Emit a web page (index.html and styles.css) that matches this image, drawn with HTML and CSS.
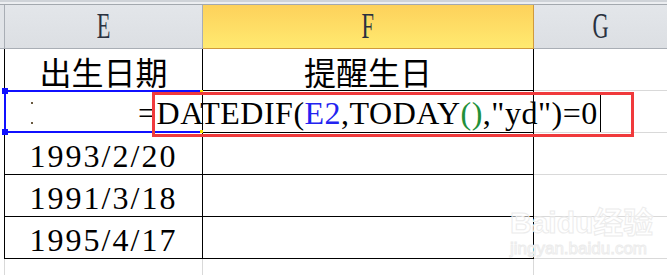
FILE: index.html
```html
<!DOCTYPE html>
<html>
<head>
    <meta charset="utf-8">
    <title>提醒生日</title>
    <link rel="stylesheet" href="styles.css">
</head>
<body>
    <div class="topbar"></div>
    <div class="sheet">
        <!-- 列标题 -->
        <div class="gutter head"></div>
        <div class="cell head"><span class="letter">E</span></div>
        <div class="cell head active"><span class="letter">F</span></div>
        <div class="cell head last"><span class="letter">G</span></div>

        <div class="gutter"></div>
        <div class="cell">出生日期</div>
        <div class="cell">提醒生日</div>
        <div class="cell last"></div>

        <!-- 正在编辑的单元格 -->
        <div class="gutter"></div>
        <div class="cell editing">
            <span class="dots"></span>
            <span class="formula">=DATEDIF(<span class="ref">E2</span>,TODAY<span class="paren">()</span>,"yd")=0<span class="caret"></span></span>
        </div>
        <div class="cell"></div>
        <div class="cell last"></div>

        <div class="gutter"></div>
        <div class="cell date">1993/2/20</div>
        <div class="cell"></div>
        <div class="cell last"></div>

        <div class="gutter"></div>
        <div class="cell date">1991/3/18</div>
        <div class="cell"></div>
        <div class="cell last"></div>

        <div class="gutter"></div>
        <div class="cell date">1995/4/17</div>
        <div class="cell"></div>
        <div class="cell last"></div>

        <div class="gutter empty"></div>
        <div class="cell empty"></div>
        <div class="cell empty"></div>
        <div class="cell empty last"></div>

        <div class="selection">
            <i class="handle tl"></i><i class="handle bl"></i>
            <i class="handle tr"></i><i class="handle br"></i>
        </div>
        <div class="mark"></div>
        <div class="watermark">
            <div class="wm-logo">Baidu经验</div>
            <div class="wm-url">jingyan.baidu.com</div>
        </div>
    </div>
</body>
</html>
```

FILE: styles.css
```css
* {
    box-sizing: border-box;
}
body {
    margin: 0;
    background: #fff;
    font-family: "Liberation Serif", "Noto Sans CJK SC", serif;
    overflow: hidden;
}
.topbar {
    height: 5px;
    background: #eceef1;
    border-top: 2px solid #cfd3d8;
    border-bottom: 1px solid #a3a8ae;
}
.sheet {
    position: relative;
    display: grid;
    grid-template-columns: 5px 198px 331px 1fr;
    grid-template-rows: 44px repeat(5, 42px) 16px;
}
.gutter {
    border-right: 1px solid #000;
}
.cell {
    display: flex;
    align-items: center;
    justify-content: center;
    border-right: 1px solid #000;
    border-bottom: 1px solid #000;
    font-family: "Noto Sans CJK SC", sans-serif;
    font-size: 32px;
    color: #000;
    padding-top: 2px;
}
.cell.last {
    border-right: none;
    border-bottom-color: #d9d9d9;
}

/* 列标题 */
.gutter.head {
    background: #e1e4e8;
    border-right-color: #a9aeb5;
    border-bottom: 1px solid #a9aeb5;
}
.cell.head {
    background: linear-gradient(#e3e6ea, #dcdfe3);
    border-right-color: #a9aeb5;
    border-bottom-color: #a9aeb5;
    padding-top: 0;
}
.cell.head:first-of-type {
    border-right-color: #d09a3c;
}
.cell.head.active {
    background: linear-gradient(#fdd15b, #ffea70);
    border-right-color: #d09a3c;
    border-bottom-color: #d09a3c;
}
.letter {
    display: inline-block;
    font-family: "Liberation Serif", serif;
    font-size: 35px;
    color: #2a3240;
    transform: scaleX(0.64);
}

.date {
    font-family: "Liberation Serif", serif;
    letter-spacing: 2px;
    padding-top: 5px;
}

.editing {
    justify-content: flex-start;
    position: relative;
    z-index: 1;
    white-space: nowrap;
    font-family: "Liberation Serif", serif;
    padding-top: 4px;
}
.dots {
    flex: none;
    width: 2px;
    height: 22px;
    margin-left: 26px;
    margin-top: -2px;
    border-top: 2px solid #6a5a40;
    border-bottom: 2px solid #6a5a40;
}
.formula {
    margin-left: 105px;
    letter-spacing: 0.5px;
    display: flex;
    align-items: center;
}
.ref {
    color: #2323f0;
}
.paren {
    color: #22903a;
}
.caret {
    display: inline-block;
    width: 1px;
    height: 40px;
    margin-left: 2px;
    margin-top: -4px;
    background: #000;
}

.empty {
    border-bottom: none;
    border-right-color: #d9d9d9;
}
.cell.empty.last {
    border-right: none;
}

/* 选中单元格 */
.selection {
    position: absolute;
    left: 4px;
    top: 85px;
    width: 198px;
    height: 43px;
    border: 2px solid #1010ff;
    border-right: none;
    z-index: 2;
}
.handle {
    position: absolute;
    width: 6px;
    height: 6px;
    background: #1010ff;
}
.handle.tl { left: -4px; top: -4px; }
.handle.bl { left: -4px; bottom: -4px; }
.handle.tr, .handle.br {
    width: 3px;
    height: 3px;
    background: #f2e200;
    right: -1px;
}
.handle.tr { top: -2px; }
.handle.br { bottom: -2px; }

/* 红框标注 */
.mark {
    position: absolute;
    left: 152px;
    top: 87px;
    width: 482px;
    height: 45px;
    border: 3px solid #f03a3c;
    z-index: 3;
}

.watermark {
    position: absolute;
    left: 510px;
    top: 200px;
    white-space: nowrap;
    font-family: "Liberation Sans", sans-serif;
    color: rgba(255, 255, 255, 0.6);
    -webkit-text-stroke: 1px #ececec;
    z-index: 1;
}
.wm-logo {
    font-family: "Liberation Sans", "Noto Sans CJK SC", sans-serif;
    font-size: 30px;
    font-weight: bold;
    line-height: 36px;
}
.wm-url {
    font-size: 17px;
    line-height: 16px;
}
```
